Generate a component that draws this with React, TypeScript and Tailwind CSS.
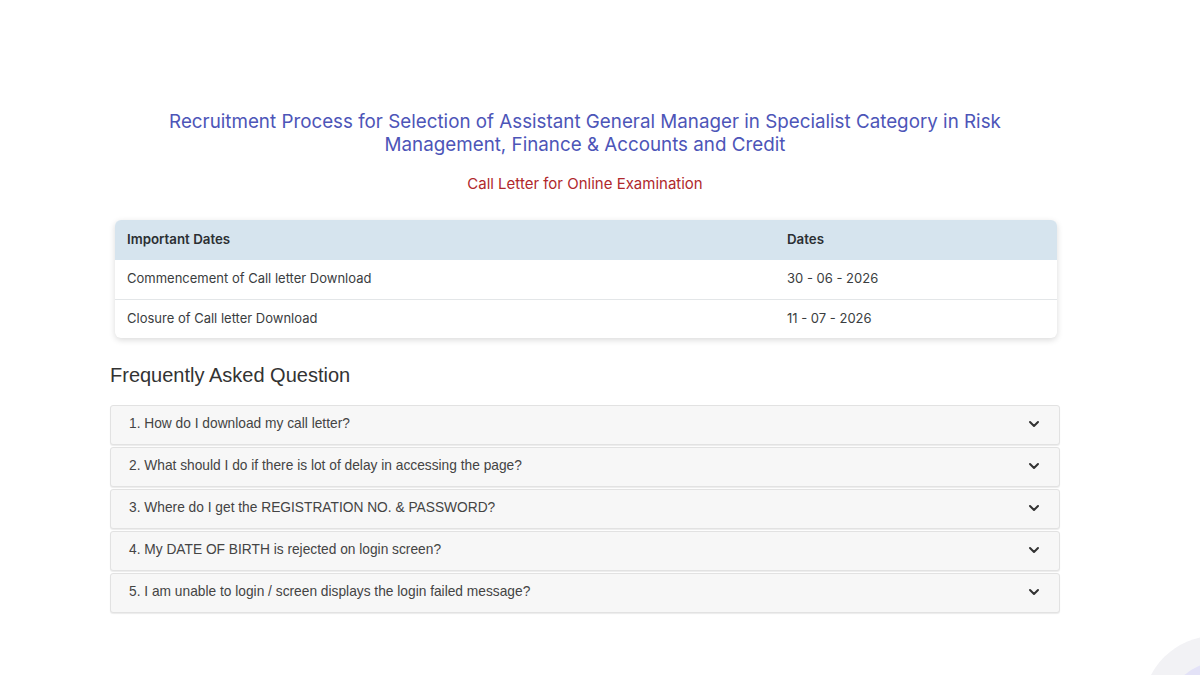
import { ChevronDown } from "lucide-react";

interface DateRow {
  label: string;
  date: string;
}

const dateRows: DateRow[] = [
  { label: "Commencement of Call letter Download", date: "30 - 06 - 2026" },
  { label: "Closure of Call letter Download", date: "11 - 07 - 2026" },
];

const questions = [
  "1. How do I download my call letter?",
  "2. What should I do if there is lot of delay in accessing the page?",
  "3. Where do I get the REGISTRATION NO. & PASSWORD?",
  "4. My DATE OF BIRTH is rejected on login screen?",
  "5. I am unable to login / screen displays the login failed message?",
];

const App = () => {
  return (
    <div className="relative w-[1200px] h-[675px] overflow-hidden bg-white font-['Inter',sans-serif]">
      <div className="w-[1170px] pt-[110px] flex flex-col items-center">
        <h1 className="text-center text-[18.8px] leading-[23px] text-[#4d55b8] max-w-[860px]">
          Recruitment Process for Selection of Assistant General Manager in Specialist Category in Risk
          Management, Finance &amp; Accounts and Credit
        </h1>
        <p className="mt-[17px] text-[15px] text-[#b0282c]">Call Letter for Online Examination</p>
      </div>

      {/* Important dates table */}
      <div className="mt-[24px] ml-[115px] w-[942px] rounded-md bg-white shadow-[0_2px_6px_rgba(0,0,0,0.15)] overflow-hidden">
        <div className="flex h-[40px] items-center bg-[#d6e4ee] text-[13.3px] font-semibold text-[#2b2f33]">
          <div className="w-[660px] pl-[12px]">Important Dates</div>
          <div className="pl-[12px]">Dates</div>
        </div>
        {dateRows.map((row, index) => (
          <div
            key={index}
            className={`flex h-[39px] items-center text-[13px] text-[#3a3d40] ${index > 0 ? "border-t border-[#e3e6e8]" : ""}`}
          >
            <div className="w-[660px] pl-[12px]">{row.label}</div>
            <div className="pl-[12px]">{row.date}</div>
          </div>
        ))}
      </div>

      {/* FAQ */}
      <h2 className="ml-[110px] mt-[25px] text-[20px] leading-[24px] text-[#333] font-['Liberation_Sans',sans-serif]">
        Frequently Asked Question
      </h2>
      <div className="ml-[110px] mt-[18px] w-[950px] flex flex-col gap-[2px] font-['Liberation_Sans',sans-serif]">
        {questions.map((q, index) => (
          <div
            key={index}
            className="flex h-[40px] items-center justify-between rounded-[3px] border border-[#e2e2e2] bg-[#f7f7f7] pl-[18px] pr-[17px] shadow-[0_1px_1px_rgba(0,0,0,0.08)]"
          >
            <span className="text-[13.75px] text-[#444]">{q}</span>
            <ChevronDown className="w-[16px] h-[16px] -mt-[2px] text-[#333]" strokeWidth={3} />
          </div>
        ))}
      </div>

      {/* decorative corner circle */}
      <div className="absolute left-[1143px] top-[636px] w-[144px] h-[144px] rounded-full bg-[#f2f2f5]" />
      <div className="absolute left-[1170px] top-[663px] w-[90px] h-[90px] rounded-full bg-[#e3e2f7]" />
    </div>
  );
};

export default App;
